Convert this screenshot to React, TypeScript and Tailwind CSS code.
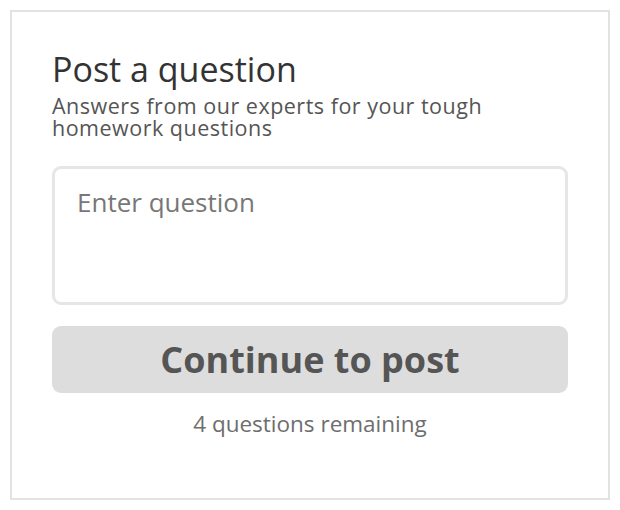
export default function App() {
  return (
    <div className="w-[620px] h-[510px] bg-white p-[10px] font-['Open_Sans',sans-serif]">
      <div className="h-[490px] w-[600px] border-2 border-[#e2e2e2] px-[40px] pt-[37px]">
        <h1 className="text-[34px] leading-[40px] text-[#333] font-normal">Post a question</h1>
        <p className="mt-[6px] text-[21.5px] leading-[22px] tracking-[0.5px] text-[#555] w-[450px]">
          Answers from our experts for your tough homework questions
        </p>
        <textarea
          className="mt-[27px] block w-[516px] h-[139px] resize-none rounded-[9px] border-[3px] border-[#e6e6e6] px-[22px] py-[16px] text-[26px] leading-[34px] text-[#333] placeholder:text-[#777] outline-none"
          placeholder="Enter question"
        />
        <button className="mt-[21px] block w-[516px] h-[67px] rounded-[9px] bg-[#dddddd] text-[36px] font-bold text-[#555]">
          Continue to post
        </button>
        <p className="mt-[16px] text-center text-[22.5px] leading-[30px] text-[#6e6e6e]">4 questions remaining</p>
      </div>
    </div>
  );
}
